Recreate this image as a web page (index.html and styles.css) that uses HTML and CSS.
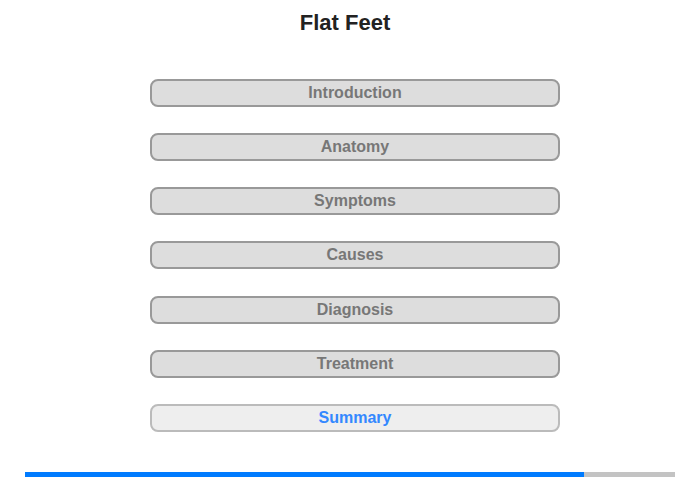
FILE: index.html
```html
<!DOCTYPE html>
<html>
<head>
<meta charset="utf-8">
<link rel="stylesheet" href="styles.css">
</head>
<body>
<div class="page">
  <h1 class="title">Flat Feet</h1>
  <nav class="menu">
    <div class="item">Introduction</div>
    <div class="item">Anatomy</div>
    <div class="item">Symptoms</div>
    <div class="item">Causes</div>
    <div class="item">Diagnosis</div>
    <div class="item">Treatment</div>
    <div class="item current">Summary</div>
  </nav>
  <div class="progress"><div class="fill" style="width:86%"></div></div>
</div>
</body>
</html>
```
FILE: styles.css
```css
html, body { margin: 0; padding: 0; background: #fff; }
.page {
  width: 700px;
  height: 480px;
  font-family: "Liberation Sans", Arial, sans-serif;
  display: flex;
  flex-direction: column;
  align-items: center;
}
.title {
  margin: 10px 10px 0 0;
  font-size: 22px;
  font-weight: bold;
  line-height: 25px;
  color: #222;
}
.menu {
  margin: 44px 0 0 10px;
  display: flex;
  flex-direction: column;
  gap: 26.17px;
}
.item {
  box-sizing: border-box;
  width: 410px;
  height: 28px;
  border: 2px solid #999;
  border-radius: 8px;
  background: #ddd;
  color: #777;
  font-size: 16px;
  font-weight: bold;
  line-height: 24px;
  text-align: center;
}
.item.current {
  background: #eee;
  border-color: #bbb;
  color: #3388ff;
}
.progress {
  margin-top: 40px;
  width: 650px;
  height: 5px;
  background: #c3c3c3;
  display: flex;
}
.fill { background: #007bff; height: 100%; }
```
